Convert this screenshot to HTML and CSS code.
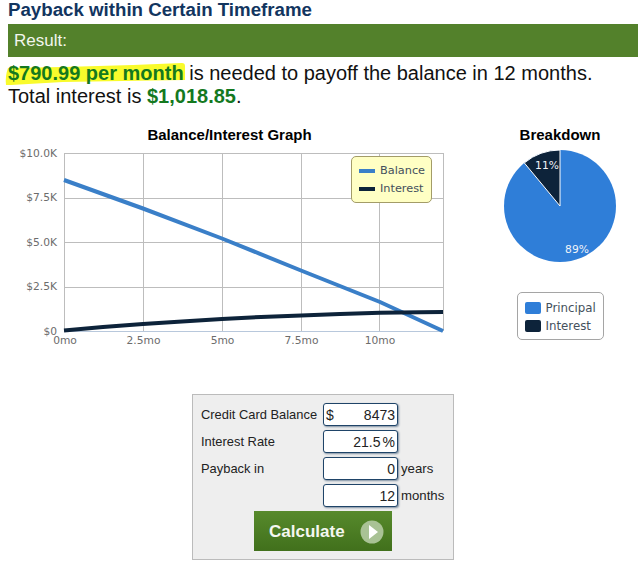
FILE: index.html
```html
<!DOCTYPE html>
<html lang="en">
<head>
<meta charset="utf-8">
<title>Payback within Certain Timeframe</title>
<link rel="stylesheet" href="styles.css">
</head>
<body>
<h1 class="title">Payback within Certain Timeframe</h1>
<div class="result-bar">Result:</div>
<p class="summary">
  <span class="marked"><svg class="marker" width="186" height="24" viewBox="0 0 186 24" aria-hidden="true"><path d="M5 6 L60 5 L130 3 L179 1 Q182 1 182 4 L182 18 L120 19 L60 20 L8 23 L3 23 Q2 14 5 6Z" fill="#f9fb2c"/></svg><b class="money">$790.99 per month</b></span> is needed to payoff the balance in 12 months.<br>
  Total interest is <b class="money">$1,018.85</b>.
</p>
<div class="charts">
  <section class="graph">
    <h2 class="chart-title">Balance/Interest Graph</h2>
    <div class="graph-body">
      <svg class="graph-svg" width="449" height="206" viewBox="0 0 449 206" aria-label="Balance and interest line chart">
        <g class="grid">
          <path d="M64.5 3V181M143.5 3V181M222.5 3V181M301.5 3V181M379.5 3V181M443.5 3V181"/>
          <path d="M64 3.5H443M64 48.5H443M64 92.5H443M64 137.5H443"/>
        </g>
        <path class="axis" d="M64 181.5H443"/>
        <path class="line-balance" d="M64 30 L143 58.5 L222 88.5 L301 120.5 L380 152 L443 181"/>
        <path class="line-interest" d="M64 180.5 L103 177 L143 174 L182 171.5 L222 169 L261 167 L301 165.5 L340 164 L380 162.8 L420 162.2 L443 162"/>
        <g class="ylab">
          <text x="57" y="7">$10.0K</text>
          <text x="57" y="51">$7.5K</text>
          <text x="57" y="96">$5.0K</text>
          <text x="57" y="140">$2.5K</text>
          <text x="57" y="185">$0</text>
        </g>
        <g class="xlab">
          <text x="65" y="194">0mo</text>
          <text x="143.5" y="194">2.5mo</text>
          <text x="222.5" y="194">5mo</text>
          <text x="301.5" y="194">7.5mo</text>
          <text x="380" y="194">10mo</text>
        </g>
      </svg>
      <ul class="graph-legend">
        <li class="legend-row"><i class="dash dash-balance"></i>Balance</li>
        <li class="legend-row"><i class="dash dash-interest"></i>Interest</li>
      </ul>
    </div>
  </section>
  <section class="breakdown">
    <h2 class="chart-title">Breakdown</h2>
    <svg class="pie" width="114" height="114" viewBox="0 0 114 114" aria-label="Breakdown pie chart">
      <circle cx="57" cy="57" r="56" fill="#2f7ed8"/>
      <path d="M57 57 L21.3 13.9 A56 56 0 0 1 57 1 Z" fill="#0d233a" stroke="#fff" stroke-width="1"/>
      <text class="pie-label" x="44" y="20">11%</text>
      <text class="pie-label" x="74" y="104">89%</text>
    </svg>
    <ul class="pie-legend">
      <li class="legend-row"><i class="swatch swatch-principal"></i>Principal</li>
      <li class="legend-row"><i class="swatch swatch-interest"></i>Interest</li>
    </ul>
  </section>
</div>
<form class="calc">
  <div class="fields">
    <label class="lbl" for="bal">Credit Card Balance</label>
    <span class="box"><span class="pre">$</span><input id="bal" class="num" value="8473"></span>
    <span></span>
    <label class="lbl" for="rate">Interest Rate</label>
    <span class="box"><input id="rate" class="num" value="21.5"><span class="post">%</span></span>
    <span></span>
    <label class="lbl" for="yrs">Payback in</label>
    <span class="box"><input id="yrs" class="num" value="0"></span>
    <span class="unit">years</span>
    <span></span>
    <span class="box"><input class="num" value="12" aria-label="Months"></span>
    <span class="unit">months</span>
  </div>
  <button class="go" type="button">Calculate
    <svg class="go-icon" width="24" height="24" viewBox="0 0 24 24" aria-hidden="true"><circle cx="12" cy="12" r="11.5" fill="#a9c295"/><path d="M9 5 L18 12 L9 19Z" fill="#fff"/></svg>
  </button>
</form>
</body>
</html>
```
FILE: styles.css
```css
* { box-sizing: border-box; }
html, body { margin: 0; background: #fff; }
body {
  padding: 0 5px 0 8px;
  font-family: "Liberation Sans", Arial, sans-serif;
  color: #111;
  overflow: hidden;
}
.title {
  margin: 0;
  height: 24px;
  font-size: 18.7px;
  line-height: 20px;
  font-weight: bold;
  color: #12355f;
}
.result-bar {
  height: 33px;
  padding-left: 6px;
  background: #53812b;
  color: #f2f6ee;
  font-size: 17px;
  line-height: 33px;
}
.summary {
  margin: 5px 0 0;
  font-size: 20px;
  line-height: 23px;
}
.marked { position: relative; display: inline-block; }
.marker { position: absolute; left: -5px; top: 0; }
.money { position: relative; color: #14791f; font-weight: bold; }
.charts {
  display: flex;
  margin-top: 18px;
}
.graph { width: 449px; }
.chart-title {
  margin: 0;
  font-size: 15px;
  line-height: 18px;
  font-weight: bold;
  color: #000;
  text-align: center;
}
.graph .chart-title { padding-right: 6px; }
.graph-body { position: relative; }
.graph-svg { display: block; margin: 6px 0 0 -8px; overflow: visible; }
.grid path { stroke: #bdbdbd; stroke-width: 1; fill: none; }
.axis { stroke: #b8c8dc; stroke-width: 1; }
.line-balance { stroke: #3a7fc8; stroke-width: 4; fill: none; }
.line-interest { stroke: #0d233a; stroke-width: 4; fill: none; }
.ylab text, .xlab text, .pie-label {
  font-family: "DejaVu Sans", Verdana, sans-serif;
  font-size: 10.7px;
}
.ylab text { fill: #6c6c6c; text-anchor: end; }
.xlab text { fill: #6c6c6c; text-anchor: middle; }
.graph-legend {
  position: absolute;
  left: 343px;
  top: 6px;
  width: 81px;
  height: 47px;
  margin: 0;
  padding: 5px 0 0 7px;
  list-style: none;
  background: #ffffc4;
  border: 1px solid #a39c68;
  border-radius: 5px;
}
.legend-row {
  display: flex;
  align-items: center;
  font-family: "DejaVu Sans", Verdana, sans-serif;
  font-size: 11.3px;
  line-height: 18px;
  color: #44505c;
}
.dash { width: 16px; height: 4px; margin-right: 5px; }
.dash-balance { background: #3a7fc8; }
.dash-interest { background: #0d233a; }
.breakdown {
  display: flex;
  flex-direction: column;
  align-items: center;
  width: 114px;
  margin-left: 46px;
}
.pie { display: block; margin-top: 5px; }
.pie-label { fill: #f0f4f8; text-anchor: middle; }
.pie-legend {
  width: 87px;
  height: 48px;
  margin: 29px 0 0;
  padding: 6px 0 0 7px;
  list-style: none;
  border: 1px solid #a5a5a5;
  border-radius: 5px;
}
.pie-legend .legend-row { font-size: 11.8px; }
.swatch { width: 16px; height: 12px; margin-right: 5px; border-radius: 2px; }
.swatch-principal { background: #2f7ed8; }
.swatch-interest { background: #0d233a; }
.calc {
  width: 262px;
  height: 166px;
  margin: 38px 0 0 184px;
  padding: 8px 0 0 8px;
  background: #eee;
  border: 1px solid #bbb;
  display: flex;
  flex-direction: column;
  font-size: 13px;
}
.fields {
  display: grid;
  grid-template-columns: 122px 75px auto;
  grid-auto-rows: 23px;
  row-gap: 4px;
  align-items: center;
  color: #222;
}
.lbl { line-height: 23px; white-space: nowrap; font-size: 12.9px; }
.box {
  display: flex;
  align-items: center;
  height: 23px;
  padding: 0 2px;
  background: #fff;
  border: 1px solid #1f4468;
  border-radius: 3px;
  box-shadow: 1px 1px 2px #7c8ea0;
}
.num {
  flex: 1;
  min-width: 0;
  width: 100%;
  padding: 0;
  border: 0;
  background: none;
  outline: none;
  text-align: right;
  font: 14px "Liberation Sans", Arial, sans-serif;
  color: #222;
}
.post { margin-left: 2px; font-size: 14px; }
.pre { font-size: 14px; }
.unit { padding-left: 3px; font-size: 13.2px; }
.go {
  display: flex;
  align-items: center;
  justify-content: space-between;
  align-self: flex-start;
  width: 138px;
  height: 40px;
  margin: 4px 0 0 53px;
  padding: 2px 8px 0 15px;
  border: 0;
  background: linear-gradient(#578a2c, #41701c);
  color: #f4f7f0;
  font: bold 17px "Liberation Sans", Arial, sans-serif;
}
.go-icon { display: block; }
```
